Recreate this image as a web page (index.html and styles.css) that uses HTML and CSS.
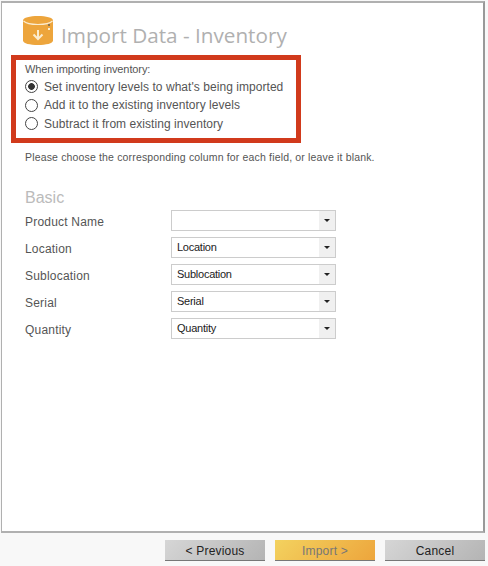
FILE: index.html
```html
<!DOCTYPE html>
<html>

<head>
    <title>Import Data - Inventory</title>
    <meta charset="utf-8">
    <link rel="stylesheet" href="styles.css">
</head>

<body>
    <div class="panel">
        <div class="header">
            <svg class="logo" width="30" height="29" viewBox="0 0 30 29">
                <path d="M0 4.500C0 1.500 7 0 15 0s15 1.500 15 4.500v20c0 3-7 4.500-15 4.500S0 27.500 0 24.500z" fill="#eda53c" />
                <path d="M0.500 5C3 7.500 8 8.500 15 8.500s12-1 14.500-3.500" fill="none" stroke="#fbeccf" stroke-width="1.200" />
                <rect x="25" y="8" width="2" height="2" fill="#8a7350" />
                <rect x="25" y="12" width="2" height="2" fill="#fbeccf" />
                <path d="M15 14v9M10.500 18.500l4.500 4.500 4.500-4.500" fill="none" stroke="#fbeccf" stroke-width="2" />
            </svg>
            <h1 class="title">Import Data - Inventory</h1>
        </div>

        <div class="options">
            <div class="options-label">When importing inventory:</div>
            <label class="radio-row"><span class="radio checked"></span>Set inventory levels to what's being imported</label>
            <label class="radio-row"><span class="radio"></span>Add it to the existing inventory levels</label>
            <label class="radio-row"><span class="radio"></span>Subtract it from existing inventory</label>
        </div>

        <p class="hint">Please choose the corresponding column for each field, or leave it blank.</p>

        <h2 class="section">Basic</h2>

        <div class="fields">
            <div class="field">
                <span class="field-name">Product Name</span>
                <div class="combo"><span class="combo-value"></span><span class="combo-arrow"></span></div>
            </div>
            <div class="field">
                <span class="field-name">Location</span>
                <div class="combo"><span class="combo-value">Location</span><span class="combo-arrow"></span></div>
            </div>
            <div class="field">
                <span class="field-name">Sublocation</span>
                <div class="combo"><span class="combo-value">Sublocation</span><span class="combo-arrow"></span></div>
            </div>
            <div class="field">
                <span class="field-name">Serial</span>
                <div class="combo"><span class="combo-value">Serial</span><span class="combo-arrow"></span></div>
            </div>
            <div class="field">
                <span class="field-name">Quantity</span>
                <div class="combo"><span class="combo-value">Quantity</span><span class="combo-arrow"></span></div>
            </div>
        </div>
    </div>

    <div class="footer">
        <button class="btn">&lt; Previous</button>
        <button class="btn btn-import">Import &gt;</button>
        <button class="btn">Cancel</button>
    </div>
</body>

</html>
```

FILE: styles.css
```css
html,
body {
    margin: 0;
    padding: 0;
}

body {
    width: 488px;
    height: 566px;
    overflow: hidden;
    background-color: #f8f8f8;
    font-family: "Liberation Sans", Arial, sans-serif;
    color: #555;
}

.panel {
    box-sizing: border-box;
    width: 484px;
    height: 532px;
    margin: 1px 0 0 1px;
    padding: 13px 0 0 9px;
    background-color: #fff;
    border: 2px solid #b0b0b0;
    border-width: 2px 2px 2px 1px;
    border-right-color: #999;
}

.header {
    display: flex;
    align-items: flex-start;
    height: 39px;
    margin-left: 12px;
}

.logo {
    flex: none;
    margin-right: 8px;
}

.title {
    margin: 5px 0 0;
    font-family: "Open Sans", sans-serif;
    font-size: 20.700px;
    line-height: 28px;
    font-weight: normal;
    color: #b0b0b0;
    white-space: nowrap;
}

.options {
    box-sizing: border-box;
    width: 290px;
    height: 88px;
    padding: 2px 0 0 9px;
    border: 5px solid #d13a1c;
}

.options-label {
    font-size: 11px;
    line-height: 15.500px;
    letter-spacing: -0.1px;
    color: #555;
}

.radio-row {
    display: flex;
    align-items: center;
    height: 18.500px;
    font-size: 12px;
    letter-spacing: 0.05px;
    color: #555;
}

.radio {
    box-sizing: border-box;
    flex: none;
    width: 13px;
    height: 13px;
    margin-right: 6px;
    border: 1px solid #444;
    border-radius: 50%;
    background-color: #fff;
}

.radio.checked {
    background: radial-gradient(circle, #333 0, #333 3px, #fff 3.700px);
}

.hint {
    margin: 8px 0 0 14px;
    font-size: 10.500px;
    line-height: 13px;
    letter-spacing: 0.16px;
    color: #555;
}

.section {
    margin: 24px 0 0 14px;
    font-size: 16px;
    line-height: 20px;
    font-weight: normal;
    color: #bbb;
}

.fields {
    display: flex;
    flex-direction: column;
    gap: 6px;
    margin: 2px 0 0 14px;
}

.field {
    display: flex;
    align-items: center;
    height: 21px;
}

.field-name {
    width: 146px;
    font-size: 12px;
    letter-spacing: 0.2px;
    color: #555;
    padding-top: 2px;
}

.combo {
    box-sizing: border-box;
    display: flex;
    width: 165px;
    height: 21px;
    border: 1px solid #ccc;
    background-color: #fff;
}

.combo-value {
    flex: 1;
    padding-left: 5px;
    font-size: 11px;
    line-height: 18px;
    letter-spacing: -0.25px;
    color: #222;
}

.combo-arrow {
    position: relative;
    width: 16px;
    background-color: #f0f0f0;
}

.combo-arrow::after {
    content: "";
    position: absolute;
    left: 5px;
    top: 8px;
    border: 3px solid transparent;
    border-top: 3px solid #222;
    border-bottom: 0;
}

.footer {
    display: flex;
    gap: 10px;
    justify-content: flex-end;
    padding: 7px 3px 0 0;
}

.btn {
    width: 100px;
    height: 21px;
    padding: 1px 0 0;
    border: 0;
    border-bottom: 1px solid #777;
    background: linear-gradient(135deg, #d6d6d6, #b4b4b4);
    font-family: "Liberation Sans", Arial, sans-serif;
    font-size: 12px;
    letter-spacing: 0.2px;
    color: #222;
}

.btn-import {
    background: linear-gradient(135deg, #f3d25f, #eda53c);
    color: #777;
}
```
